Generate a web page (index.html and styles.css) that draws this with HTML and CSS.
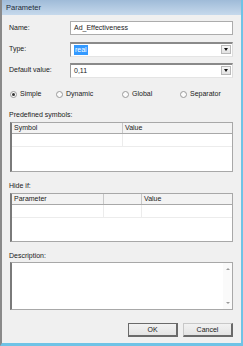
FILE: index.html
```html
<!DOCTYPE html>
<html>
<head>
<meta charset="utf-8">
<link rel="stylesheet" href="styles.css">
</head>
<body>
<div class="window">
  <div class="titlebar">Parameter</div>
  <div class="client">
    <div class="form">
      <div class="lbl">Name:</div>
      <div class="field">Ad_Effectiveness</div>
      <div class="lbl">Type:</div>
      <div class="field combo"><span class="sel">real</span><span class="drop"><span class="tri"></span></span></div>
      <div class="lbl">Default value:</div>
      <div class="field combo"><span>0,11</span><span class="drop"><span class="tri"></span></span></div>
    </div>
    <div class="radios">
      <div class="radio r1"><span class="dot checked"></span>Simple</div>
      <div class="radio r2"><span class="dot"></span>Dynamic</div>
      <div class="radio r3"><span class="dot"></span>Global</div>
      <div class="radio r4"><span class="dot"></span>Separator</div>
    </div>
    <div class="caption c1">Predefined symbols:</div>
    <div class="list l1">
      <div class="head"><div class="col sym">Symbol</div><div class="col val">Value</div></div>
      <div class="row"><div class="col sym"></div><div class="col val"></div></div>
    </div>
    <div class="caption c2">Hide if:</div>
    <div class="list l2">
      <div class="head"><div class="col par">Parameter</div><div class="col mid"></div><div class="col val">Value</div></div>
      <div class="row"><div class="col par"></div><div class="col mid"></div><div class="col val"></div></div>
    </div>
    <div class="caption c3">Description:</div>
    <div class="memo">
      <div class="memo-text"></div>
      <div class="scroll"><span class="up"></span><span class="down"></span></div>
    </div>
    <div class="buttons">
      <div class="btn ok">OK</div>
      <div class="btn cancel">Cancel</div>
    </div>
  </div>
</div>
</body>
</html>
```
FILE: styles.css
```css
* { box-sizing: border-box; }
html, body { margin: 0; padding: 0; }
body {
  font-family: "Liberation Sans", Arial, sans-serif;
  font-size: 7px;
  color: #1a1a1a;
  background: #f0f0f0;
}
.window {
  width: 243px;
  height: 346px;
  border-left: 2px solid #8a8a8a;
  border-right: 2px solid #6fc3e6;
  border-bottom: 3px solid #6fc3e6;
  background: #f0f0f0;
  display: flex;
  flex-direction: column;
}
.titlebar {
  height: 15px;
  flex: none;
  background: linear-gradient(#9fbbd8, #c6d9ec);
  font-size: 7.5px;
  line-height: 15px;
  padding-left: 4px;
  color: #1e2a38;
}
.client {
  flex: 1;
  padding: 6px 8px 0 7px;
  display: flex;
  flex-direction: column;
}
.form {
  display: grid;
  grid-template-columns: 61px 1fr;
  grid-auto-rows: 14px;
  row-gap: 7px;
  align-items: center;
}
.lbl { line-height: 14px; }
.field {
  height: 14px;
  background: #fff;
  border: 1px solid #acacac;
  line-height: 12px;
  padding-left: 3px;
  display: flex;
  align-items: center;
}
.combo {
  border-top: 2px solid #8a8a8a;
  border-left: 1px solid #9a9a9a;
  border-right: 1px solid #dcdcdc;
  border-bottom: 1px solid #e4e4e4;
  height: 15px;
  justify-content: space-between;
  padding-right: 1px;
}
.sel {
  background: #3399ff;
  color: #fff;
  padding: 0 1px;
  line-height: 10px;
}
.drop {
  width: 10px;
  height: 9px;
  border: 1px solid #b8b8b8;
  background: linear-gradient(#f6f6f6, #e2e2e2);
  display: flex;
  align-items: center;
  justify-content: center;
}
.tri {
  width: 0; height: 0;
  border-left: 2.5px solid transparent;
  border-right: 2.5px solid transparent;
  border-top: 3px solid #111;
}
.radios {
  margin-top: 12px;
  height: 10px;
  position: relative;
}
.radio {
  position: absolute;
  top: 0;
  height: 10px;
  line-height: 10px;
  display: flex;
  align-items: center;
  gap: 3px;
}
.r1 { left: 1px; }
.r2 { left: 47px; }
.r3 { left: 113px; }
.r4 { left: 171px; }
.dot {
  width: 7px;
  height: 7px;
  border-radius: 50%;
  border: 1px solid #9a9a9a;
  background: #fbfbfb;
  position: relative;
}
.dot.checked::after {
  content: "";
  position: absolute;
  left: 1px; top: 1px;
  width: 3px; height: 3px;
  border-radius: 50%;
  background: #333;
}
.caption { height: 9px; line-height: 9px; }
.c1 { margin-top: 11px; margin-bottom: 3px; }
.c2 { margin-top: 9px; margin-bottom: 3px; }
.c3 { margin-top: 9px; margin-bottom: 2px; }
.list {
  margin-left: 1px;
  background: #fff;
  border: 1px solid #a8a8a8;
  border-left: 2px solid #7a7a7a;
  display: flex;
  flex-direction: column;
}
.l1 { height: 50px; }
.l2 { height: 49px; }
.head {
  display: flex;
  height: 11px;
  background: #f3f3f3;
  border-bottom: 1px solid #a8a8a8;
}
.head .col {
  line-height: 10px;
  padding-left: 2px;
  border-right: 1px solid #c8c8c8;
}
.row {
  display: flex;
  height: 13px;
  border-bottom: 1px solid #ececec;
}
.row .col { border-right: 1px solid #ececec; }
.l1 .sym { width: 111px; }
.l1 .val { flex: 1; }
.l2 .par { width: 92px; }
.l2 .mid { width: 38px; }
.l2 .val { flex: 1; }
.col:last-child { border-right: none; }
.memo {
  margin-left: 1px;
  height: 48px;
  background: #fff;
  border: 1px solid #a8a8a8;
  border-left: 2px solid #7a7a7a;
  display: flex;
}
.memo-text { flex: 1; }
.scroll {
  width: 9px;
  background: #fafafa;
  display: flex;
  flex-direction: column;
  justify-content: space-between;
  align-items: center;
  padding: 5px 0 5px;
}
.up, .down {
  width: 0; height: 0;
  border-left: 2px solid transparent;
  border-right: 2px solid transparent;
}
.up { border-bottom: 2px solid #9a9a9a; }
.down { border-top: 2px solid #9a9a9a; }
.buttons {
  margin-top: 13px;
  display: flex;
  justify-content: flex-end;
  gap: 5px;
  padding-right: 0;
}
.btn {
  height: 14px;
  width: 50px;
  line-height: 11px;
  text-align: center;
  background: linear-gradient(#f2f2f2, #e4e4e4);
  border: 1px solid #8a8a8a;
}
.ok {
  border: 1px solid #6a6a6a;
  border-right-width: 2px;
  border-bottom-width: 2px;
}
.cancel {
  border-right: 2px solid #6a6a6a;
  border-bottom: 2px solid #6a6a6a;
  border-top-color: #c8c8c8;
  border-left-color: #c8c8c8;
}
```
